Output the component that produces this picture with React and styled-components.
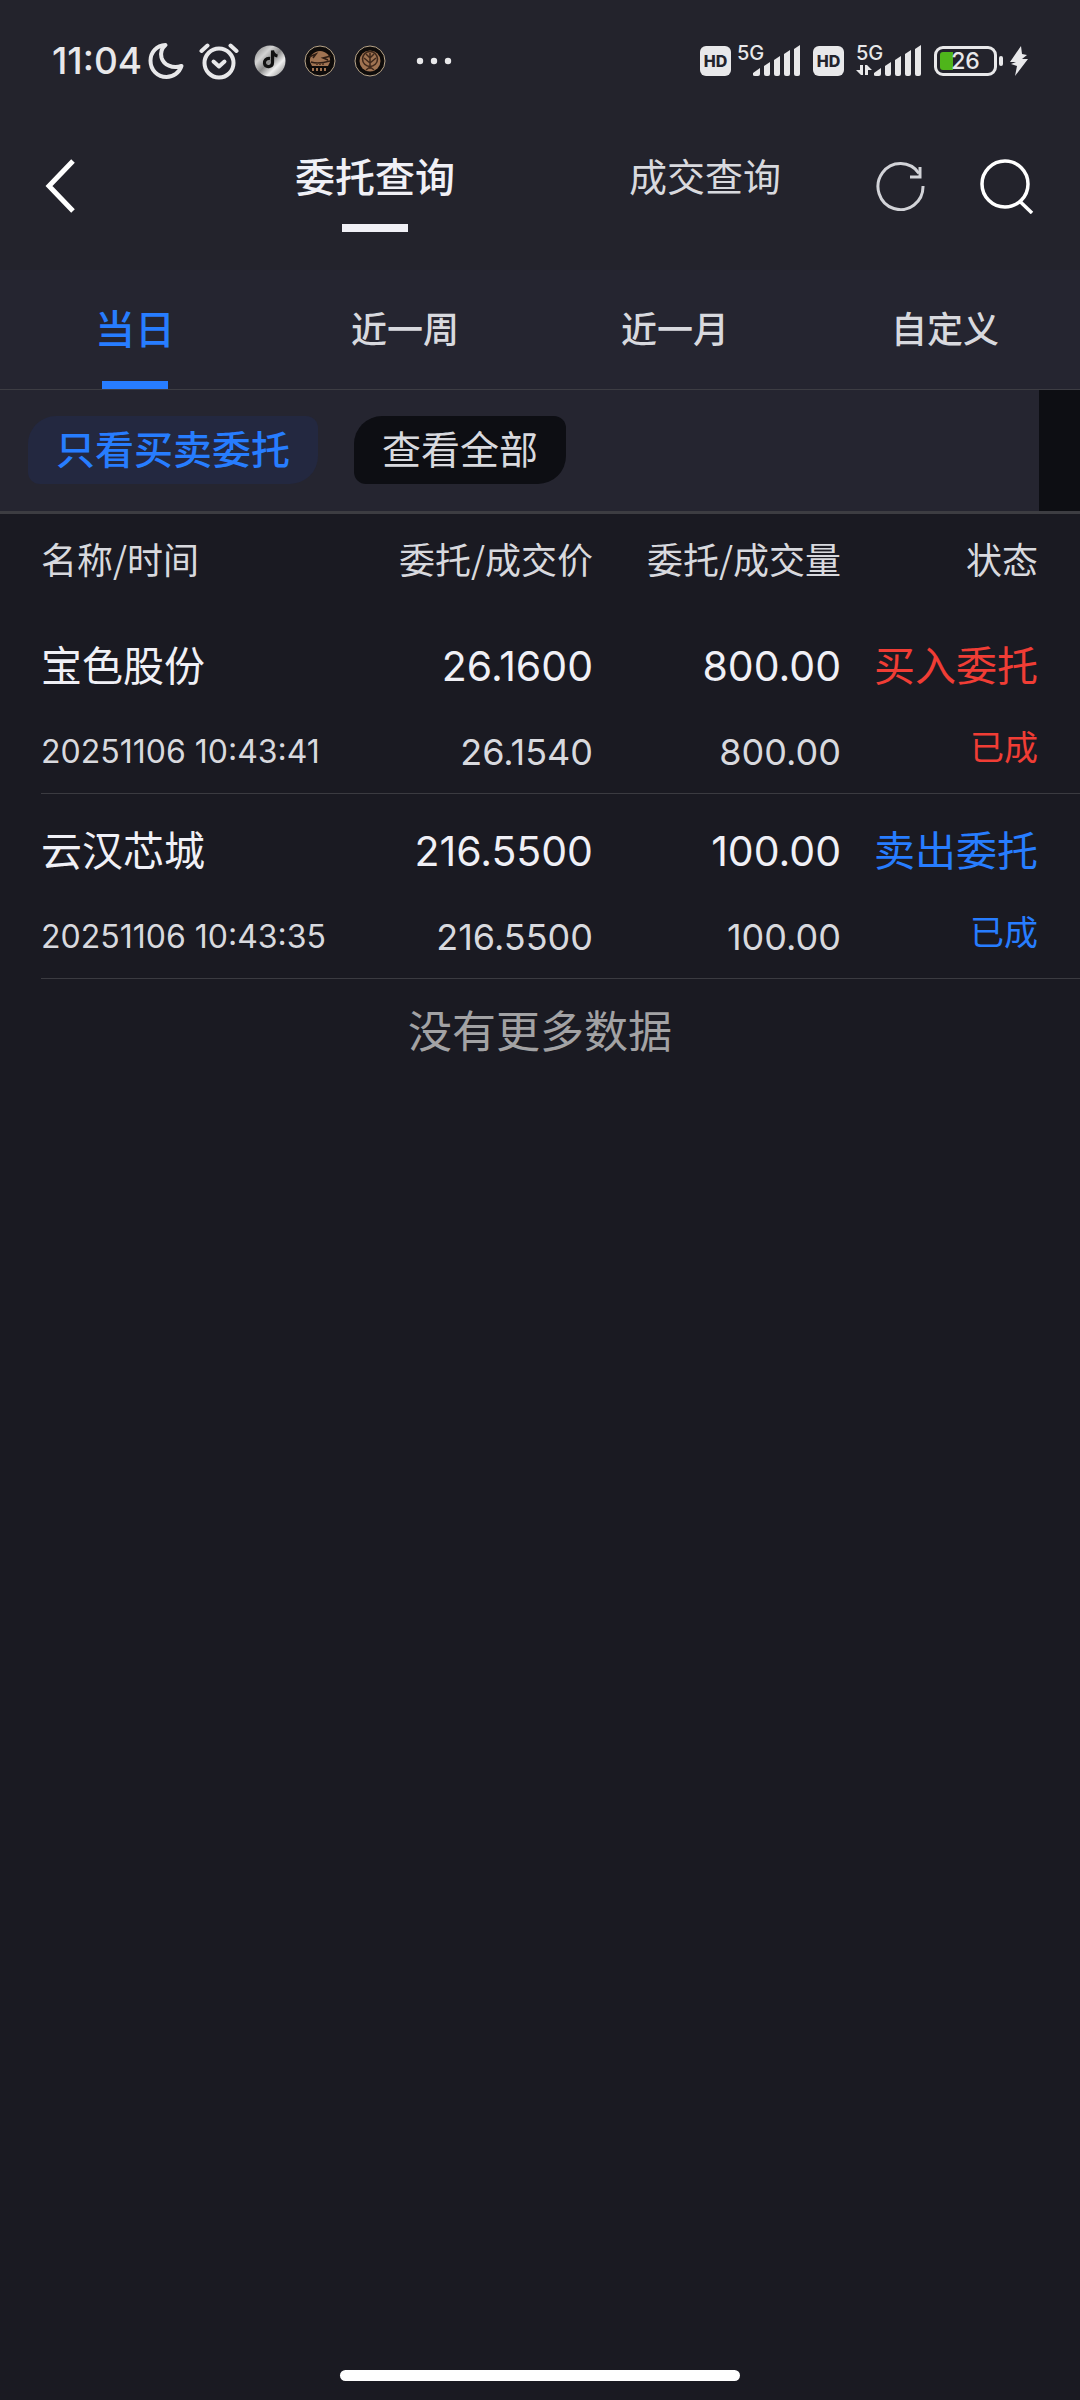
import { useState } from 'react'
import styled, { createGlobalStyle } from 'styled-components'

const GlobalStyle = createGlobalStyle`
	* {
		box-sizing: border-box;
	}

	body {
		margin: 0;
		background: #1a1a22;
		color: #d8d9de;
		font-family: 'Noto Sans CJK SC', sans-serif;
	}

	button {
		padding: 0;
		border: 0;
		background: none;
		color: inherit;
		font: inherit;
		cursor: pointer;
	}
`

const Page = styled.div`
	display: flex;
	flex-direction: column;
	min-height: 100vh;
`

/* status bar */

const StatusBar = styled.div`
	display: flex;
	justify-content: space-between;
	align-items: center;
	height: 122px;
	padding: 0 52px;
	background: #23232c;
	color: #e8e8ea;
	font-family: Inter, sans-serif;
`

const StatusGroup = styled.div`
	display: flex;
	align-items: center;
	gap: ${props => props.$gap}px;
`

const Clock = styled.time`
	font-size: 37px;
	font-weight: 500;
	line-height: 40px;
`

const HdBadge = styled.span`
	width: 31px;
	border-radius: 6px;
	background: #e8e8ea;
	color: #23232c;
	font-size: 16px;
	font-weight: 800;
	line-height: 30px;
	text-align: center;
`

const Signal = styled.div`
	display: flex;
	align-items: flex-end;
`

const Network = styled.span`
	align-self: flex-start;
	width: 27px;
	margin-right: ${props => (props.$data ? -27 : -11)}px;
	font-size: 20px;
	font-weight: 500;
	line-height: 16px;
	text-align: right;
`

const Battery = styled.div`
	display: flex;
	align-items: center;
	gap: 2px;

	&::after {
		content: '';
		width: 4px;
		height: 10px;
		border-radius: 2px;
		background: #e8e8ea;
	}
`

const BatteryCase = styled.div`
	width: 63px;
	height: 30px;
	padding: 3px;
	border: 3px solid #e8e8ea;
	border-radius: 9px;
`

const BatteryLevel = styled.div`
	height: 100%;
	border-radius: 3px;
	background: linear-gradient(to right, #4fb51b ${props => props.$level}%, transparent 0);
	font-size: 23px;
	font-weight: 500;
	line-height: 18px;
	text-align: center;
`

/* title bar */

const TopBar = styled.header`
	display: flex;
	align-items: flex-start;
	height: 148px;
	padding-top: 24px;
	background: #23232c;
`

const BackButton = styled.button`
	display: flex;
	align-items: center;
	width: 210px;
	height: 80px;
	padding-left: 44px;
`

const Modes = styled.nav`
	display: flex;
	flex: 1;
`

const Mode = styled.button`
	display: flex;
	flex: 1;
	flex-direction: column;
	align-items: center;
	gap: 20px;
	color: ${props => (props.$active ? '#f0f0f6' : '#d8d9de')};
	font-size: ${props => (props.$active ? 40 : 38)}px;
	font-weight: ${props => (props.$active ? 500 : 400)};
	line-height: 58px;

	&::after {
		content: '';
		width: 66px;
		height: 8px;
		background: ${props => (props.$active ? '#f0f0f6' : 'transparent')};
	}
`

const Actions = styled.div`
	display: flex;
	align-items: center;
	justify-content: flex-end;
	gap: 54px;
	width: 210px;
	height: 80px;
	padding-right: 46px;

	button {
		display: flex;
	}
`

/* period tabs */

const Periods = styled.nav`
	display: flex;
	height: 120px;
	border-bottom: 1px solid #3d3d43;
	background: #252530;
`

const Period = styled.button`
	display: flex;
	flex: 1;
	flex-direction: column;
	align-items: center;
	justify-content: space-between;
	padding-top: 28px;
	color: ${props => (props.$active ? '#277dff' : '#d8d9de')};
	font-size: ${props => (props.$active ? 40 : 36)}px;
	font-weight: 500;
	line-height: 58px;

	&::after {
		content: '';
		width: 66px;
		height: 8px;
		background: ${props => (props.$active ? '#277dff' : 'transparent')};
	}
`

/* filter chips */

const Filters = styled.div`
	display: flex;
	align-items: flex-start;
	gap: 36px;
	height: 124px;
	padding-left: 28px;
	border-bottom: 3px solid #3d3d42;
	background: #252530;
`

const Chip = styled.button`
	height: 68px;
	margin-top: 26px;
	padding: 0 28px 6px;
	border-radius: 28px 12px;
	background: ${props => (props.$active ? '#232840' : '#0d0e13')};
	color: ${props => (props.$active ? '#277dff' : '#d8d9de')};
	font-size: 39px;
	font-weight: ${props => (props.$active ? 500 : 400)};
	line-height: 56px;
`

const FilterEdge = styled.div`
	align-self: stretch;
	width: 41px;
	margin-left: auto;
	background: #0d0e13;
`

/* orders */

const TableWrap = styled.main`
	padding-left: 41px;
`

const Table = styled.table`
	width: 100%;
	border-spacing: 0;
	table-layout: fixed;
	text-align: right;
	white-space: nowrap;

	th {
		height: 95px;
		padding: 0 0 8px;
		font-size: 36px;
		font-weight: 400;
		line-height: 56px;
	}

	th:first-child,
	td:first-child {
		width: 28%;
		text-align: left;
	}

	th:nth-child(3) {
		width: 248px;
	}

	th:last-child {
		width: 239px;
	}

	th:last-child,
	td:last-child {
		padding-right: 42px;
	}
`

const Cell = styled.td`
	height: 185px;
	padding: ${props => (props.$numeric ? 29 : 26)}px 0 0;
	border-bottom: 1px solid #3b3b41;
	vertical-align: top;
	font-family: ${props => (props.$numeric ? 'Inter, sans-serif' : 'inherit')};
`

const Primary = styled.div`
	color: ${props => props.$color || '#f0f0f6'};
	font-size: 41px;
	line-height: 56px;
`

const Secondary = styled.div`
	margin-top: 30px;
	color: ${props => props.$color || '#d8d9de'};
	font-size: ${props => (props.$color ? 34 : 36)}px;
	line-height: ${props => (props.$color ? 50 : 56)}px;
`

const OrderTime = styled(Secondary)`
	font-family: Inter, sans-serif;
	font-size: 32px;
	line-height: 62px;
`

const NoMore = styled.p`
	margin: 0;
	padding-top: 18px;
	color: #a2a2a4;
	font-size: 44px;
	line-height: 64px;
	text-align: center;
`

const HomeIndicator = styled.div`
	width: 37%;
	height: 11px;
	margin: auto auto 19px;
	border-radius: 6px;
	background: #fff;
`

function MoonIcon() {
	return (
		<svg width="36" height="38" viewBox="0 0 36 38" fill="none" stroke="#e8e8ea" strokeWidth="4" strokeLinejoin="round">
			<path d="M17.5 3C8.500 3.500 2.500 10.500 2.500 18.800C2.500 28 9.500 35 18.500 35C25.500 35 31.500 30.500 33.500 24C24.500 27 15.500 23 13.500 15.500C12.300 10.500 14 6 17.500 3Z" />
		</svg>
	)
}

function AlarmIcon() {
	return (
		<svg width="40" height="38" viewBox="0 0 40 38" fill="none" stroke="#e8e8ea" strokeWidth="4" strokeLinecap="round" strokeLinejoin="round">
			<circle cx="20" cy="21" r="14.500" />
			<path d="M14.500 19.500L20 24.500L25.500 19.500" />
			<path d="M2.500 9L8.500 3.500M37.500 9L31.500 3.500" />
		</svg>
	)
}

function MusicCoin() {
	return (
		<svg width="32" height="32" viewBox="0 0 32 32">
			<defs>
				<linearGradient id="steel" x1="0" y1="0" x2="1" y2="1">
					<stop offset="0" stopColor="#777" />
					<stop offset="0.3" stopColor="#d4d4d4" />
					<stop offset="0.5" stopColor="#8a8a8a" />
					<stop offset="0.7" stopColor="#f0f0f0" />
					<stop offset="1" stopColor="#777" />
				</linearGradient>
			</defs>
			<circle cx="16" cy="16" r="15.500" fill="url(#steel)" />
			<path d="M16 13.500C12 13 10 16 10.500 18.500C11.500 23 18.500 22.500 18.500 17.500V5.500C19 9 21 10.500 23.500 11" fill="none" stroke="#111" strokeWidth="3.200" />
		</svg>
	)
}

function ShipCoin() {
	return (
		<svg width="32" height="32" viewBox="0 0 32 32" fill="none">
			<circle cx="16" cy="16" r="15" fill="#0e0b0a" stroke="#b9a588" />
			<path d="M6 17C5 11 10 6 16 6C22 6 27 11 26 17L24 21H8Z" fill="#a07352" />
			<path d="M5 12L12 9L9 13M27 11L19 13L24 15M7 17C13 19 19 18 26 16" stroke="#2e1d14" strokeWidth="1.500" />
			<path d="M12 19H20" stroke="#5a3c28" strokeWidth="2" strokeDasharray="2 1" />
			<path d="M8 24.500H24" stroke="#a07352" strokeWidth="3" strokeDasharray="2 2" />
		</svg>
	)
}

function TreeCoin() {
	return (
		<svg width="32" height="32" viewBox="0 0 32 32" fill="none">
			<circle cx="16" cy="16" r="15" fill="#0e0b0a" stroke="#b9a588" />
			<circle cx="16" cy="16" r="10.500" fill="#a07352" />
			<circle cx="16" cy="14" r="7.500" stroke="#3f281b" strokeWidth="1.500" />
			<path d="M16 8V24M16 18L10 13M16 18L22 13M16 13L12 9M16 13L20 9M12 25L16 22L20 25" stroke="#3f281b" strokeWidth="1.500" />
		</svg>
	)
}

function MoreIcon() {
	return (
		<svg width="36" height="8" viewBox="0 0 36 8" fill="#e8e8ea">
			<circle cx="4" cy="4" r="3.200" />
			<circle cx="18" cy="4" r="3.200" />
			<circle cx="32" cy="4" r="3.200" />
		</svg>
	)
}

function BarsIcon({ data }) {
	return (
		<svg width={data ? 66 : 48} height="32" viewBox={data ? '-18 0 66 32' : '0 0 48 32'} fill="#e8e8ea">
			<path d="M0 30V28L7 23V29Q7 31 5 31H2Q0 31 0 30Z" />
			<path d="M11 21L17 17V29Q17 31 15 31H13Q11 31 11 29Z" />
			<path d="M21 15L27 11V29Q27 31 25 31H23Q21 31 21 29Z" />
			<path d="M31 9L37 5V29Q37 31 35 31H33Q31 31 31 29Z" />
			<path d="M41 4L47 0V29Q47 31 45 31H43Q41 31 41 29Z" />
			{data && <path d="M-18 25H-14V20H-11V30H-13ZM-9 20H-7L-2 25H-6V30H-9Z" />}
		</svg>
	)
}

function BoltIcon() {
	return (
		<svg width="18" height="30" viewBox="0 0 18 30" fill="#e8e8ea">
			<path d="M11 0L0 16H6L1 18L7 20L5 30L18 13H12L17 9L12 8Z" />
		</svg>
	)
}

function BackIcon() {
	return (
		<svg width="32" height="54" viewBox="0 0 32 54" fill="none" stroke="#fff" strokeWidth="5">
			<path d="M29 2L5 27L29 52" />
		</svg>
	)
}

function RefreshIcon() {
	return (
		<svg width="50" height="50" viewBox="0 0 50 50" fill="none" stroke="#d2d3d8" strokeWidth="3">
			<path d="M47 25A22.500 23 0 1 1 43 12.500" />
			<path d="M44 6V16H34" />
		</svg>
	)
}

function SearchIcon() {
	return (
		<svg width="54" height="56" viewBox="0 0 54 56" fill="none" stroke="#fff" strokeWidth="3.500">
			<circle cx="25" cy="26" r="23" />
			<path d="M39.500 43L52 55" />
		</svg>
	)
}

const RED = '#f03d35'
const BLUE = '#277dff'

const modes = ['委托查询', '成交查询']
const periods = ['当日', '近一周', '近一月', '自定义']
const filters = ['只看买卖委托', '查看全部']

const orders = [
	{
		name: '宝色股份',
		time: '20251106 10:43:41',
		price: '26.1600',
		dealPrice: '26.1540',
		amount: '800.00',
		dealAmount: '800.00',
		side: '买入委托',
		status: '已成',
		color: RED,
	},
	{
		name: '云汉芯城',
		time: '20251106 10:43:35',
		price: '216.5500',
		dealPrice: '216.5500',
		amount: '100.00',
		dealAmount: '100.00',
		side: '卖出委托',
		status: '已成',
		color: BLUE,
	},
]

function PhoneStatus() {
	return (
		<StatusBar>
			<StatusGroup $gap={15}>
				<StatusGroup $gap={6}>
					<Clock>11:04</Clock>
					<MoonIcon />
				</StatusGroup>
				<AlarmIcon />
				<StatusGroup $gap={30}>
					<StatusGroup $gap={18}>
						<MusicCoin />
						<ShipCoin />
						<TreeCoin />
					</StatusGroup>
					<MoreIcon />
				</StatusGroup>
			</StatusGroup>
			<StatusGroup $gap={12}>
				<StatusGroup $gap={6}>
					<HdBadge>HD</HdBadge>
					<Signal>
						<Network>5G</Network>
						<BarsIcon />
					</Signal>
				</StatusGroup>
				<HdBadge>HD</HdBadge>
				<Signal>
					<Network $data>5G</Network>
					<BarsIcon data />
				</Signal>
				<StatusGroup $gap={7}>
					<Battery>
						<BatteryCase>
							<BatteryLevel $level={26}>26</BatteryLevel>
						</BatteryCase>
					</Battery>
					<BoltIcon />
				</StatusGroup>
			</StatusGroup>
		</StatusBar>
	)
}

function OrderRow({ order }) {
	return (
		<tr>
			<Cell>
				<Primary>{order.name}</Primary>
				<OrderTime>{order.time}</OrderTime>
			</Cell>
			<Cell $numeric>
				<Primary>{order.price}</Primary>
				<Secondary>{order.dealPrice}</Secondary>
			</Cell>
			<Cell $numeric>
				<Primary>{order.amount}</Primary>
				<Secondary>{order.dealAmount}</Secondary>
			</Cell>
			<Cell>
				<Primary $color={order.color}>{order.side}</Primary>
				<Secondary $color={order.color}>{order.status}</Secondary>
			</Cell>
		</tr>
	)
}

function App() {
	const [mode, setMode] = useState(modes[0])
	const [period, setPeriod] = useState(periods[0])
	const [filter, setFilter] = useState(filters[0])

	return (
		<Page>
			<GlobalStyle />
			<PhoneStatus />
			<TopBar>
				<BackButton aria-label="返回">
					<BackIcon />
				</BackButton>
				<Modes>
					{modes.map(item => (
						<Mode key={item} $active={item === mode} onClick={() => setMode(item)}>
							{item}
						</Mode>
					))}
				</Modes>
				<Actions>
					<button aria-label="刷新">
						<RefreshIcon />
					</button>
					<button aria-label="搜索">
						<SearchIcon />
					</button>
				</Actions>
			</TopBar>
			<Periods>
				{periods.map(item => (
					<Period key={item} $active={item === period} onClick={() => setPeriod(item)}>
						{item}
					</Period>
				))}
			</Periods>
			<Filters>
				{filters.map(item => (
					<Chip key={item} $active={item === filter} onClick={() => setFilter(item)}>
						{item}
					</Chip>
				))}
				<FilterEdge />
			</Filters>
			<TableWrap>
				<Table>
					<thead>
						<tr>
							<th>名称/时间</th>
							<th>委托/成交价</th>
							<th>委托/成交量</th>
							<th>状态</th>
						</tr>
					</thead>
					<tbody>
						{orders.map(order => (
							<OrderRow key={order.time} order={order} />
						))}
					</tbody>
				</Table>
			</TableWrap>
			<NoMore>没有更多数据</NoMore>
			<HomeIndicator />
		</Page>
	)
}

export default App
